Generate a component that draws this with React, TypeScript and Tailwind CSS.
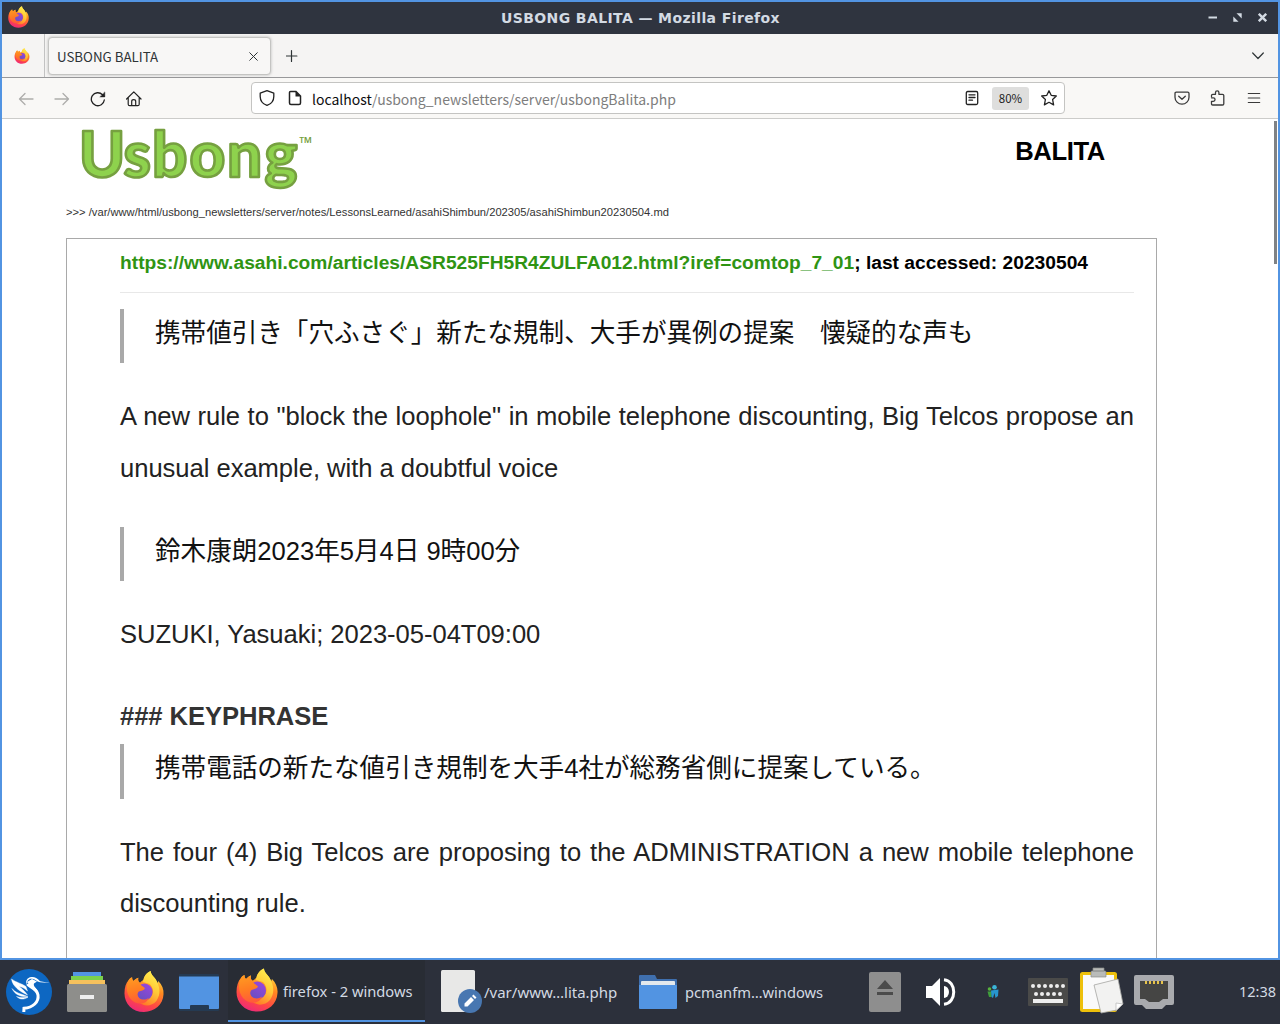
import React from 'react';

const ui = "font-['Noto_Sans_CJK_JP',sans-serif]";
const task = "font-['Noto_Sans',sans-serif]";

function Firefox({ id, className }: { id: string; className: string }) {
  return (
    <svg viewBox="0 0 42 44" className={className}>
      <defs>
        <linearGradient id={id + 'a'} x1="0.75" y1="0" x2="0.35" y2="1">
          <stop offset="0.1" stopColor="#ffd83f" />
          <stop offset="0.4" stopColor="#ff8a20" />
          <stop offset="0.75" stopColor="#ff4745" />
          <stop offset="1" stopColor="#ee2a78" />
        </linearGradient>
        <linearGradient id={id + 'b'} x1="0.7" y1="0" x2="0.3" y2="1">
          <stop offset="0" stopColor="#fff14f" />
          <stop offset="0.5" stopColor="#ffc737" />
          <stop offset="1" stopColor="#ff7a28" />
        </linearGradient>
        <linearGradient id={id + 'c'} x1="0.8" y1="0" x2="0.2" y2="1">
          <stop offset="0" stopColor="#9a45dc" />
          <stop offset="1" stopColor="#6650c0" />
        </linearGradient>
        <linearGradient id={id + 'd'} x1="0.3" y1="0" x2="0.5" y2="1">
          <stop offset="0" stopColor="#ff9a22" />
          <stop offset="0.5" stopColor="#ff7d22" />
          <stop offset="1" stopColor="#ff5a3a" />
        </linearGradient>
      </defs>
      <path d="M5 10C5 10 6 8 8.500 7C8.500 9 9 10 10 11C12 9 13 8 15 7.500C14.500 10 15 12 17 12.500C19 11 20 10 21 9.500C21 6 24 2 28 0.500C28 4 31 6 33 9C34 11 35 12 35 13.500L36 11C40 15 42 20 41.500 25C41 36 32 43.500 21 43.500C9 43.500 0.500 35 0.500 24C0.500 18 2 13 5 10Z" fill={'url(#' + id + 'a)'} />
      <path d="M28 .5C28 4 31 6 33 9C38 17 39 25 34 32C29 38 20 38 16 33L24 30C32 27 32 19 27 14L20 12C20 7 24 2 28 .5Z" fill={'url(#' + id + 'b)'} />
      <ellipse cx="21.500" cy="22.500" rx="8.500" ry="9" fill={'url(#' + id + 'c)'} />
      <path d="M5 10C6 8 7 7.500 8.500 7C8.500 9 9 10 10 11C12 9 13 8 15 7.500C14.500 10 15 12 17 14C18 16 21 17 22 18.500C21 21 18 21 15.500 22C13.500 24 14 27 16 29C19 31 23 31 26 28.500C24 36 13 37 7 30C2 24 2 15 5 10Z" fill={'url(#' + id + 'd)'} />
    </svg>
  );
}

function Stroke({ children, className, box = '0 0 16 16', w = 1.3 }: { children: React.ReactNode; className: string; box?: string; w?: number }) {
  return (
    <svg viewBox={box} className={className} fill="none" stroke="currentColor" strokeWidth={w} strokeLinecap="round" strokeLinejoin="round">
      {children}
    </svg>
  );
}

function TitleBar() {
  return (
    <div className="flex h-8 shrink-0 items-center bg-[#2f343f] pl-1.5 pr-[11px]">
      <div className="w-[72px]">
        <Firefox id="ft" className="mb-0.5 h-[22px] w-[21px]" />
      </div>
      <div className="flex-1 whitespace-nowrap pl-1 text-center font-['DejaVu_Sans',sans-serif] text-[14px] font-bold leading-8 tracking-[0.4px] text-[#d3dae3]">USBONG BALITA — Mozilla Firefox</div>
      <div className="flex w-[70px] items-center justify-end gap-4 pb-0.5 text-[#d3dae3]">
        <svg viewBox="0 0 9 9" className="h-[9px] w-[9px]" fill="currentColor"><path d="M.5 3.500H9V5.500H.5Z" /></svg>
        <svg viewBox="0 0 9 9" className="h-[9px] w-[9px]" fill="currentColor"><path d="M3.500 .3H8.700V5.500ZM.3 3.500V8.700H5.500Z" /></svg>
        <svg viewBox="0 0 9 9" className="h-[9px] w-[9px]" fill="none" stroke="currentColor" strokeWidth="2.400"><path d="M.8 .8L8.200 8.200M8.200 .8L.8 8.200" /></svg>
      </div>
    </div>
  );
}

function TabBar() {
  return (
    <div className="flex h-[44px] shrink-0 items-stretch border-b border-[#98989a] bg-[#f5f4f3] text-[#2e3436]">
      <div className="flex w-[43px] items-center border-r border-[#c2c2c2] pl-3">
        <Firefox id="fp" className="h-4 w-4" />
      </div>
      <div className="ml-[3px] mt-[3px] flex h-[38px] w-[223px] items-center justify-between rounded-[4px] border border-[#c4c4c2] bg-[#f8f7f6] pl-2 pr-3 shadow-[0_0_3px_rgba(0,0,0,0.25)]">
        <span className={'pt-0.5 text-[13.300px] leading-5 ' + ui}>USBONG BALITA</span>
        <Stroke className="h-[9px] w-[9px]" box="0 0 9 9" w={1}><path d="M.7 .7L8.300 8.300M8.300 .7L.7 8.300" /></Stroke>
      </div>
      <div className="ml-[15px] flex items-center pt-px">
        <Stroke className="h-3 w-3" box="0 0 12 12" w={1.2}><path d="M5.500 .6V11.400M.1 6H10.900" /></Stroke>
      </div>
      <div className="ml-auto mr-3.5 flex items-center">
        <Stroke className="h-3 w-3" box="0 0 12 12" w={1.2}><path d="M.7 3L6 8.500L11.300 3" /></Stroke>
      </div>
    </div>
  );
}

function NavBar() {
  return (
    <div className="flex h-[41px] shrink-0 items-center border-b border-[#ccccca] bg-[#f9f8f6] text-[#222]">
      <div className="flex w-[249px] items-center gap-5 pl-4 pt-px">
        <Stroke className="h-4 w-4 text-[#adadab]"><path d="M1.500 8H15M7 2.500L1.500 8L7 13.500" /></Stroke>
        <Stroke className="h-4 w-4 text-[#adadab]"><path d="M1 8H14.500M9 2.500L14.500 8L9 13.500" /></Stroke>
        <svg viewBox="0 0 16 16" className="h-4 w-4" fill="none" stroke="currentColor" strokeWidth="1.300" strokeLinecap="round"><path d="M14.300 9A6.500 6.500 0 1 1 12.500 3.700L14 5.200" /><path d="M14.800 1.300V5.900H10.200Z" fill="currentColor" strokeWidth=".5" strokeLinejoin="round" /></svg>
        <Stroke className="h-4 w-4" w={1.2}><path d="M.6 8L7.800 .8L15 8M2.200 6.700V13.200Q2.200 14.700 3.700 14.700H11.700Q13.200 14.700 13.200 13.200V6.700M5.700 14.500V10.500Q5.700 8.700 7.700 8.700Q9.700 8.700 9.700 10.500V14.500" /></Stroke>
      </div>
      <div className="flex h-8 w-[814px] items-center rounded-[4px] border border-[#c4c4c2] bg-white pl-[7px] pr-[7px]">
        <Stroke className="h-4 w-4" w={1.3}><path d="M8 .7L14.800 3.200V6.500C14.800 10.800 12.200 14 8 15.400C3.800 14 1.200 10.800 1.200 6.500V3.200Z" /></Stroke>
        <svg viewBox="0 0 16 16" className="ml-3 h-4 w-4"><path d="M3.500 1.600H9L13.500 6V13Q13.500 14.500 12 14.500H4Q2.500 14.500 2.500 13V2.600Q2.500 1.600 3.500 1.600Z" fill="none" stroke="currentColor" strokeWidth="1.500" /><path d="M8.500 1.300V6.500H13.800Z" fill="currentColor" /></svg>
        <span className={'ml-[9px] pt-px text-[14px] leading-6 text-[#7d7d7d] ' + ui}><span className="text-[#0c0c0d]">localhost</span>/usbong_newsletters/server/usbongBalita.php</span>
        <Stroke className="ml-auto h-4 w-4" w={1.3}><path d="M3.800 1.500H12.200Q13.700 1.500 13.700 3V13Q13.700 14.500 12.200 14.500H3.800Q2.300 14.500 2.300 13V3Q2.300 1.500 3.800 1.500ZM5 4.800H11M5 7.500H11M5 10.200H8.500" /></Stroke>
        <span className={'ml-3 flex h-[23px] w-[37px] items-center justify-center rounded-[3px] bg-[#dededd] pt-px text-[11.500px] ' + ui}>80%</span>
        <Stroke className="ml-3 h-4 w-4" w={1.3}><path d="M8 .8L10.200 5.300L15.300 6L11.600 9.500L12.600 14.900L8 12.300L3.400 14.900L4.400 9.500L.7 6L5.800 5.300Z" /></Stroke>
      </div>
      <div className="ml-auto mr-4 flex items-center gap-5 text-[#3a3a3a]">
        <Stroke className="h-4 w-4" w={1.3}><path d="M2.300 2.200H13.700Q15 2.200 15 3.500V7.200A7 7 0 0 1 1 7.200V3.500Q1 2.200 2.300 2.200ZM4.700 6.200L8 9.300L11.300 6.200" /></Stroke>
        <Stroke className="h-4 w-4" w={1.3}><path d="M1.500 6.500V5.500Q1.500 4.300 2.700 4.300H5.500V2.500A1.700 1.700 0 0 1 8.900 2.500V4.300H12.500Q13.800 4.300 13.800 5.500V13.800Q13.800 15 12.500 15H2.700Q1.500 15 1.500 13.800V11.300H3.300A1.700 1.700 0 0 0 3.300 7.800H1.500" /></Stroke>
        <Stroke className="h-4 w-4" w={1.2}><path d="M2.300 3.500H13.700M2.300 8H13.700M2.300 12.500H13.700" /></Stroke>
      </div>
    </div>
  );
}

function Quote({ className, children }: { className: string; children: React.ReactNode }) {
  return <blockquote className={'whitespace-nowrap border-l-4 border-[#a9a9a9] pl-[31px] leading-[48px] tracking-[-0.02px] text-[#111] ' + className}>{children}</blockquote>;
}

function Page() {
  return (
    <main className="flex min-h-0 flex-1 justify-between overflow-hidden bg-white font-['Liberation_Sans','Noto_Sans_CJK_JP',sans-serif] text-[#222]">
      <div className="ml-16 flex w-[1091px] flex-col">
        <header className="flex h-[119px] shrink-0 flex-col">
          <div className="flex h-[84px] justify-between pl-[14px] pr-[52px]">
            <div className="flex">
              <svg viewBox="0 0 219 84" className="h-[84px] w-[219px] overflow-visible">
                <text x="-1 43.500 72 109.500 147 184.500" y="58" fontFamily="Lato, sans-serif" fontWeight="900" fontSize="62" fill="#8ed24d" stroke="#76a040" strokeWidth="2.600" strokeLinejoin="round">Usbong</text>
              </svg>
              <span className="pt-3 font-['Open_Sans',sans-serif] text-[17px] font-bold leading-6 text-[#76a040]">™</span>
            </div>
            <h1 className="pt-4 text-[25.600px] font-bold leading-8 tracking-[-0.35px] text-black">BALITA</h1>
          </div>
          <div className="text-[11.200px] leading-[18px] text-[#333]">&gt;&gt;&gt; /var/www/html/usbong_newsletters/server/notes/LessonsLearned/asahiShimbun/202305/asahiShimbun20230504.md</div>
        </header>
        <article className="flex flex-1 flex-col border border-b-0 border-[#a9a9a9] pl-[53px] pr-[22px] text-[25.600px] leading-[51.600px]">
          <div className="h-[54px] shrink-0 whitespace-nowrap border-b border-[#e8e8e8] pt-[10px] text-[19.200px] font-bold leading-7 tracking-[0.01px] text-black"><span className="text-[#2f9413]">https://www.asahi.com/articles/ASR525FH5R4ZULFA012.html?iref=comtop_7_01</span>; last accessed: 20230504</div>
          <Quote className="mt-4 h-[54px]">携帯値引き「穴ふさぐ」新たな規制、大手が異例の提案　懐疑的な声も</Quote>
          <p className="mt-[28px] text-justify tracking-[-0.04px]">A new rule to "block the loophole" in mobile telephone discounting, Big Telcos propose an unusual example, with a doubtful voice</p>
          <Quote className="mt-[32.800px] h-[54px]">鈴木康朗2023年5月4日 9時00分</Quote>
          <p className="mt-[28px] tracking-[-0.04px]">SUZUKI, Yasuaki; 2023-05-04T09:00</p>
          <h2 className="mt-[36.600px] font-bold leading-[38px] tracking-[-0.06px] text-[#333]">### KEYPHRASE</h2>
          <Quote className="mt-[8.800px] h-[55px]">携帯電話の新たな値引き規制を大手4社が総務省側に提案している。</Quote>
          <p className="mt-[27.800px] text-justify leading-[51.200px] tracking-[-0.04px]">The four (4) Big Telcos are proposing to the ADMINISTRATION a new mobile telephone discounting rule.</p>
        </article>
      </div>
      <div className="mr-px mt-[2px] h-[143px] w-[3px] bg-[#7f8285]" />
    </main>
  );
}

function Taskbar() {
  return (
    <footer className={'flex h-16 shrink-0 items-center bg-[#2c303b] text-[15px] text-[#d3dae3] ' + task}>
      <svg viewBox="0 0 46 46" className="ml-1.5 h-[46px] w-[46px]">
        <circle cx="23" cy="23" r="23" fill="#0d67c2" />
        <path d="M21.500 16C20 12 23 9.500 26 9.800C29 10 30.500 12.500 34 13.300L44 14L34 12.300C31 8.500 28.500 7.800 25.500 8C21 8.500 18.500 12.500 21.500 16Z" fill="#fff" />
        <path d="M21.500 15C23 18 31 19 32 26C33 33 27 38.500 18 39.300L17.800 43" fill="none" stroke="#fff" strokeWidth="3" />
        <path d="M21 13L26 10L31 12.500L28 14.500C27 17 30 19 32 22L27 20Z" fill="#fff" />
        <path d="M5.500 10C10 13.500 16 14.500 20 17.500L21.500 22C18 19 16 18 13 17.500C17 20.500 19 22.500 21.500 26C16 23.500 14 22 11 19.500C8 16.500 6 14 5.500 10ZM6 19.500C9 23.500 14 24.500 22 27.500C15 28 9 26 6 19.500ZM10.500 27.500C14 28.700 18 28.500 22 28.300C17 31 14 30.500 10.500 27.500Z" fill="#fff" stroke="#fff" strokeWidth=".4" />
      </svg>
      <svg viewBox="0 0 40 40" className="ml-[15px] h-10 w-10">
        <path d="M6 0H34V6H6Z" fill="#5294e2" /><path d="M4 4H36V10H4Z" fill="#7bd04b" /><path d="M2 8H38V15H2Z" fill="#f6c15d" />
        <rect y="12" width="40" height="28" rx="1.500" fill="#8e8e8b" /><path d="M13 23H27V27H13Z" fill="#eee" />
      </svg>
      <Firefox id="fl" className="-mt-0.5 ml-[17px] h-[43px] w-10" />
      <svg viewBox="0 0 40 40" className="ml-[15px] h-10 w-10"><rect y="2" width="40" height="37" rx="1" fill="#253a52" /><path d="M0 4.500H40V36Q40 37 39 37H30V34Q30 33 29 33H12Q11 33 11 34V37H1Q0 37 0 36Z" fill="#5294e2" /></svg>
      <div className="ml-[9px] flex h-[62px] w-[197px] items-center self-start border-b-2 border-[#5294e2] bg-[#282c34] pl-2">
        <Firefox id="fw" className="h-[44px] w-[42px]" />
        <span className="ml-[5px] whitespace-nowrap pt-0.5 text-[14.700px]">firefox - 2 windows</span>
      </div>
      <svg viewBox="0 0 42 44" className="ml-4 h-[44px] w-[42px]"><rect width="34" height="42" rx="1.500" fill="#e8e8e7" /><circle cx="29" cy="31" r="12" fill="#4877b1" /><path d="M23.500 36.500V33.500L30 27L33 30L26.500 36.500ZM31 26L32.500 24.500L35.500 27.500L34 29Z" fill="#fff" /></svg>
      <span className="ml-px w-[134px] whitespace-nowrap pt-px">/var/www…lita.php</span>
      <svg viewBox="0 0 38 34" className="ml-[21px] h-[34px] w-[38px]"><path d="M0 1Q0 0 1 0H16L18 4H37Q38 4 38 5V20H0Z" fill="#3f6fae" /><path d="M2 7Q2 6 3 6H35Q36 6 36 7V15H2Z" fill="#e4e9ed" /><path d="M0 10H38V33Q38 34 37 34H1Q0 34 0 33Z" fill="#5294e2" /></svg>
      <span className="ml-[8px] whitespace-nowrap pt-px text-[14.700px]">pcmanfm…windows</span>
      <div className="ml-auto flex items-center pr-1">
        <svg viewBox="0 0 32 40" className="h-10 w-8"><rect width="32" height="40" rx="2" fill="#8e8e8e" /><path d="M16 8L24 17H8ZM8 20H24V23H8Z" fill="#4b4b4b" /></svg>
        <svg viewBox="0 0 30 28" className="ml-[25px] h-7 w-[30px]"><path d="M0 8H6L14 0V28L6 20H0Z" fill="#fff" /><path d="M18 8A5 6 0 0 1 18 20Z" fill="#fff" /><path d="M18 1.700C31 3 31 25 18 26.300" fill="none" stroke="#fff" strokeWidth="3" /></svg>
        <svg viewBox="0 0 14 16" className="ml-[30px] h-4 w-3.5"><circle cx="3.500" cy="5" r="1.800" fill="#58b33d" /><path d="M1.500 7.500H5.500V13H3Z" fill="#3f9e3b" /><circle cx="8.500" cy="3.300" r="2.300" fill="#3bb4d8" /><path d="M5 6.500L12.500 5.500L12 12L9.500 14L8.500 9L7 14L5.500 13Z" fill="#2795cd" /></svg>
        <svg viewBox="0 0 40 28" className="ml-7 h-7 w-10">
          <rect width="40" height="28" rx="1" fill="#4a4a49" />
          <g fill="#eee">
            {[5, 11, 17, 23, 29, 35].map((x) => <circle key={x} cx={x} cy="8" r="2" />)}
            {[8, 14, 20, 26, 32].map((x) => <circle key={x} cx={x} cy="16" r="2" />)}
            <rect x="5" y="21" width="30" height="4" />
          </g>
        </svg>
        <svg viewBox="0 0 44 48" className="mb-0.5 ml-3 h-12 w-11"><rect x="1.500" y="6.500" width="34" height="37" rx="1" fill="#fafafa" stroke="#edc00b" strokeWidth="3" /><path d="M11 10V5Q11 4 12 4H25Q26 4 26 5V10ZM13 1H24V4H13Z" fill="#b9bbb9" stroke="#8b8d8a" strokeWidth=".7" /><path d="M14 18L38 12L43 37L37 43L21 46Z" fill="#f2f2f1" stroke="#a6a6a2" strokeWidth=".8" /><path d="M36 43.500L43 37L36 36Z" fill="#fff" stroke="#aaa" strokeWidth=".6" /></svg>
        <svg viewBox="0 0 40 34" className="ml-2.5 h-[34px] w-10"><path d="M2 0H38Q40 0 40 2V28Q40 30 38 30H32L28 34H12L8 30H2Q0 30 0 28V2Q0 0 2 0Z" fill="#a9aaae" /><path d="M6 6H34V24H29L25 27H15L11 24H6Z" fill="#454544" /><path d="M12 6V9M16 6V9M20 6V9M24 6V9M28 6V9" stroke="#e7c34a" strokeWidth="2" /></svg>
        <span className="ml-[65px] whitespace-nowrap text-[14.500px]">12:38</span>
      </div>
    </footer>
  );
}

export default function App() {
  return (
    <div className="flex h-[1024px] w-[1280px] flex-col overflow-hidden">
      <div className="flex h-[960px] flex-col border-2 border-[#5294e2]">
        <TitleBar />
        <TabBar />
        <NavBar />
        <Page />
      </div>
      <Taskbar />
    </div>
  );
}
